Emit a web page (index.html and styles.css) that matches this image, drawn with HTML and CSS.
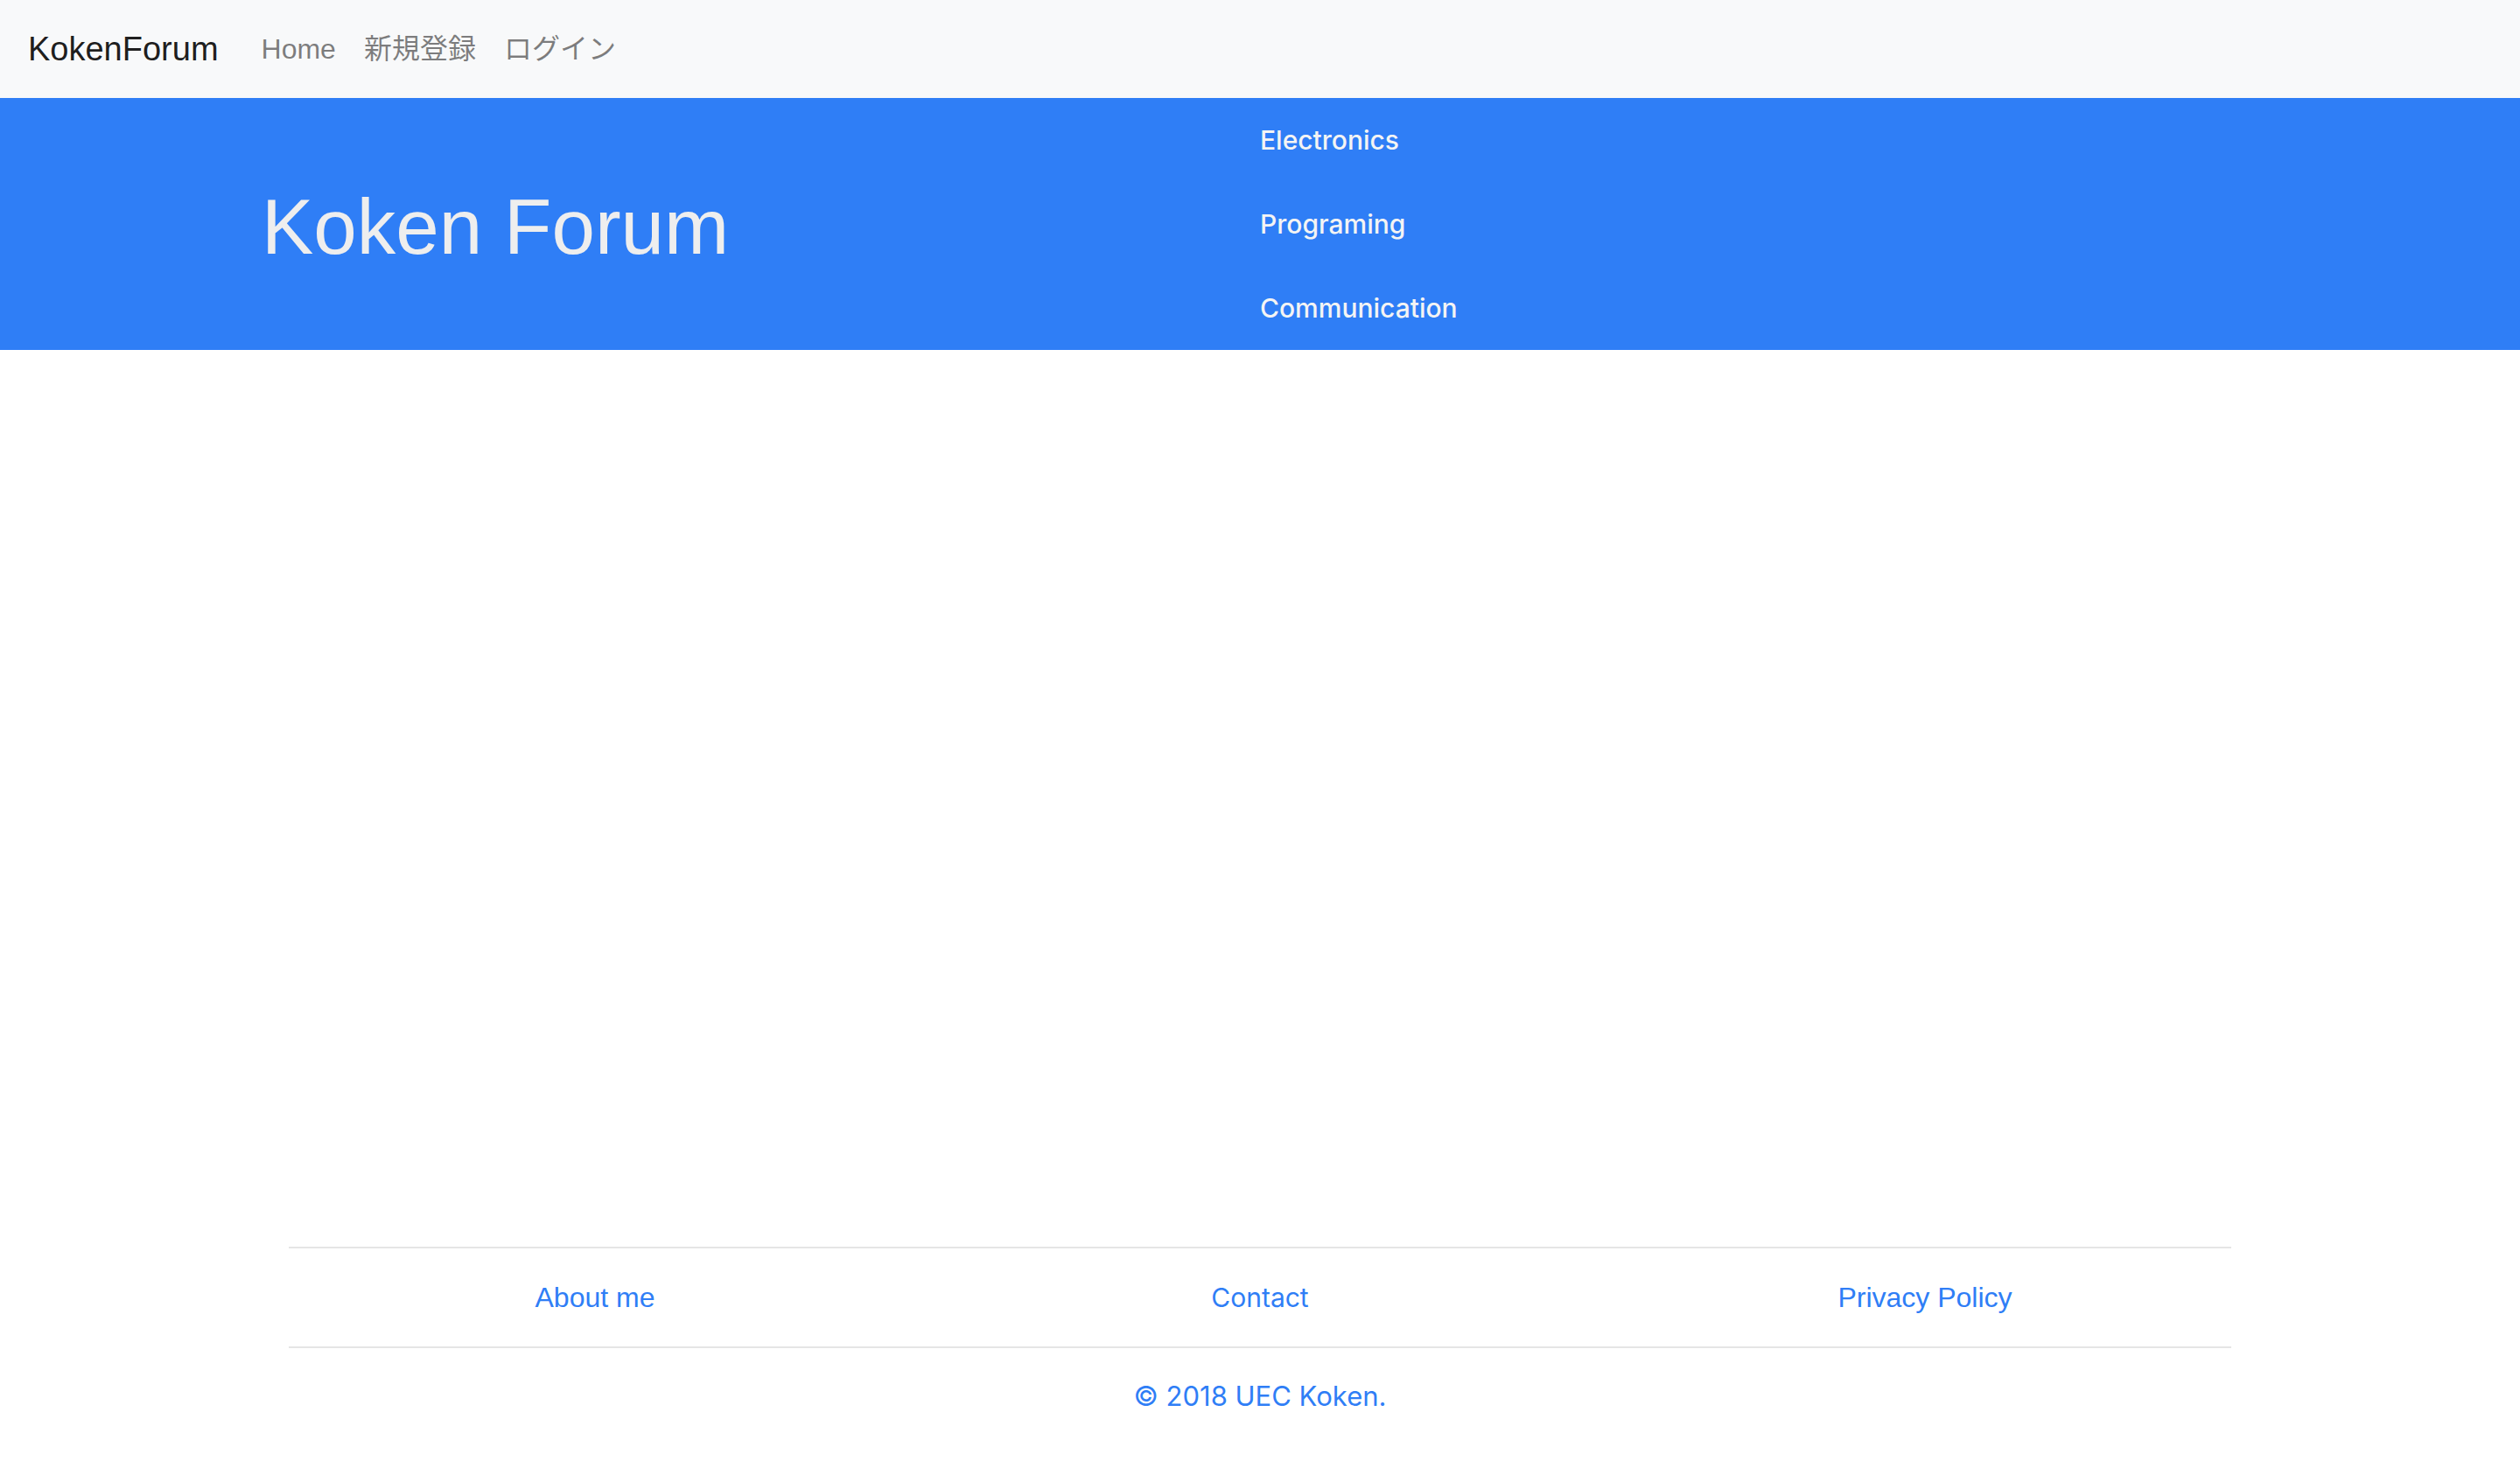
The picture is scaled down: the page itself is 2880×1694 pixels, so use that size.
FILE: index.html
```html
<!DOCTYPE html>
<html lang="ja">
<head>
<meta charset="utf-8">
<title>KokenForum</title>
<link rel="stylesheet" href="styles.css">
</head>
<body>
  <nav class="navbar">
    <a class="brand" href="#">KokenForum</a>
    <a class="nav-link" href="#">Home</a>
    <a class="nav-link" href="#">新規登録</a>
    <a class="nav-link" href="#">ログイン</a>
  </nav>

  <header class="hero">
    <h1 class="hero-title">Koken Forum</h1>
    <ul class="topics">
      <li><a href="#">Electronics</a></li>
      <li><a href="#">Programing</a></li>
      <li><a href="#">Communication</a></li>
    </ul>
  </header>

  <main class="content"></main>

  <footer class="footer">
    <div class="footer-nav">
      <div class="footer-row">
        <div class="footer-col"><a class="plain" href="#">About me</a></div>
        <div class="footer-col"><a class="sys" href="#">Contact</a></div>
        <div class="footer-col"><a class="plain" href="#">Privacy Policy</a></div>
      </div>
    </div>
    <p class="copyright">© 2018 UEC Koken.</p>
  </footer>
</body>
</html>
```

FILE: styles.css
```css
body {
  margin: 0;
  min-height: 100vh;
  display: flex;
  flex-direction: column;
  font-family: "Liberation Sans", "Noto Sans CJK JP", sans-serif;
  background-color: #fff;
}
a {
  text-decoration: none;
}

.navbar {
  height: 112px;
  box-sizing: border-box;
  padding: 0 32px;
  display: flex;
  align-items: center;
  background-color: #f8f9fa;
}
.brand {
  font-size: 38px;
  line-height: 60px;
  color: rgba(0, 0, 0, .9);
  margin-right: 33px;
}
.nav-link {
  font-size: 32px;
  line-height: 48px;
  padding: 0 16px;
  color: rgba(0, 0, 0, .5);
}

.hero {
  display: grid;
  grid-template-columns: 1fr 1fr;
  background-color: #2f7ef6;
}
.hero-title {
  margin: 0;
  padding: 6px 0 0 299px;
  display: flex;
  align-items: center;
  font-size: 89px;
  font-weight: 400;
  color: #eeeeee;
}
.topics {
  list-style: none;
  margin: 0;
  padding: 0;
}
.topics a {
  display: block;
  padding: 24px 0;
  line-height: 48px;
  font-family: Inter, "Liberation Sans", sans-serif;
  font-weight: 500;
  font-size: 30px;
  color: #f4f4f4;
}

.content {
  flex: 1;
}

.footer {
  width: 2220px;
  margin: 0 auto;
}
.footer-nav {
  border-top: 2px solid #e5e5e5;
  border-bottom: 2px solid #e5e5e5;
}
.footer-row {
  display: grid;
  grid-template-columns: 1fr 1fr 1fr;
  margin: 0 -30px;
}
.footer-col {
  padding: 32px 30px;
  text-align: center;
  line-height: 48px;
  font-size: 32px;
}
.footer-col a {
  color: #2f7ef6;
}
.footer-col .sys {
  font-family: Inter, "Liberation Sans", sans-serif;
  font-size: 30px;
}
.copyright {
  margin: 0;
  padding: 31px 0 74px;
  text-align: center;
  line-height: 48px;
  font-family: Inter, "Liberation Sans", sans-serif;
  font-size: 31px;
  color: #2f7ef6;
}
```
